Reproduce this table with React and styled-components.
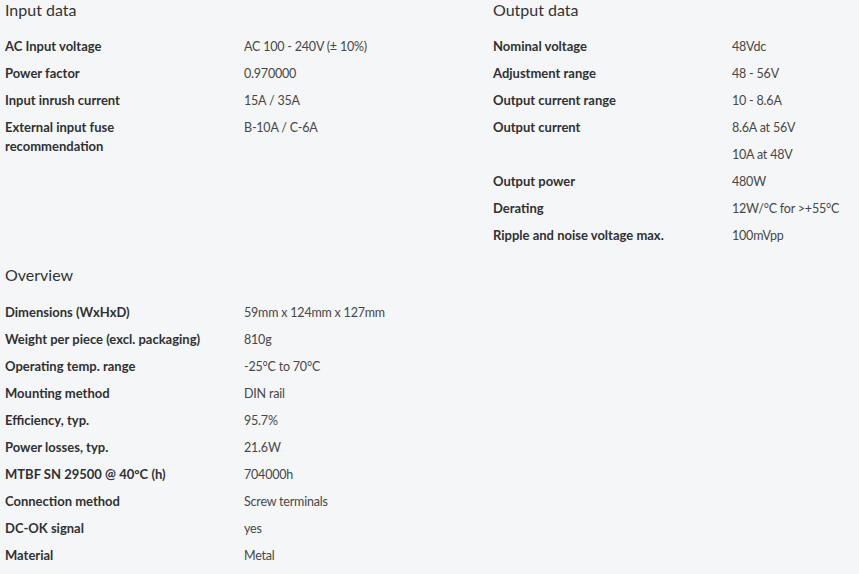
import React from 'react';
import styled, { createGlobalStyle } from 'styled-components';

const GlobalStyle = createGlobalStyle`
  html, body {
    margin: 0;
    padding: 0;
    background: #f5f6f8;
  }
  body {
    font-family: Lato, "Open Sans", Arial, sans-serif;
    color: #333;
  }
`;

const Page = styled.div`
  padding: 0 0 0 5px;
  width: 854px;
`;

const TopGrid = styled.div`
  display: grid;
  grid-template-columns: 488px 1fr;
  align-items: start;
`;

const Section = styled.section`
  margin-top: ${({ spaced }) => (spaced ? '16px' : '0')};
`;

const Heading = styled.h3`
  margin: 0 0 ${({ gap }) => gap}px;
  font-size: 16px;
  line-height: 20px;
  font-weight: 400;
  color: #333;
`;

const Row = styled.div`
  display: grid;
  grid-template-columns: 239px 1fr;
  padding: 4px 0;
  line-height: 19px;
`;

const Label = styled.div`
  font-size: 13px;
  font-weight: 700;
  color: #2f3133;
  padding-right: 30px;
`;

const Value = styled.div`
  font-size: 12.5px;
  letter-spacing: -0.2px;
  color: #474747;
`;

const inputData = [
  ['AC Input voltage', 'AC 100 - 240V (± 10%)'],
  ['Power factor', '0.970000'],
  ['Input inrush current', '15A / 35A'],
  ['External input fuse recommendation', 'B-10A / C-6A'],
];

const outputData = [
  ['Nominal voltage', '48Vdc'],
  ['Adjustment range', '48 - 56V'],
  ['Output current range', '10 - 8.6A'],
  ['Output current', '8.6A at 56V'],
  ['', '10A at 48V'],
  ['Output power', '480W'],
  ['Derating', '12W/°C for >+55°C'],
  ['Ripple and noise voltage max.', '100mVpp'],
];

const overview = [
  ['Dimensions (WxHxD)', '59mm x 124mm x 127mm'],
  ['Weight per piece (excl. packaging)', '810g'],
  ['Operating temp. range', '-25°C to 70°C'],
  ['Mounting method', 'DIN rail'],
  ['Efficiency, typ.', '95.7%'],
  ['Power losses, typ.', '21.6W'],
  ['MTBF SN 29500 @ 40°C (h)', '704000h'],
  ['Connection method', 'Screw terminals'],
  ['DC-OK signal', 'yes'],
  ['Material', 'Metal'],
];

const SpecTable = ({ title, rows, gap = 13, spaced }) => (
  <Section spaced={spaced}>
    <Heading gap={gap}>{title}</Heading>
    {rows.map(([label, value], i) => (
      <Row key={i}>
        <Label>{label}</Label>
        <Value>{value}</Value>
      </Row>
    ))}
  </Section>
);

const App = () => (
  <Page>
    <GlobalStyle />
    <TopGrid>
      <SpecTable title="Input data" rows={inputData} />
      <SpecTable title="Output data" rows={outputData} />
    </TopGrid>
    <SpecTable title="Overview" rows={overview} gap={14} spaced />
  </Page>
);

export default App;
